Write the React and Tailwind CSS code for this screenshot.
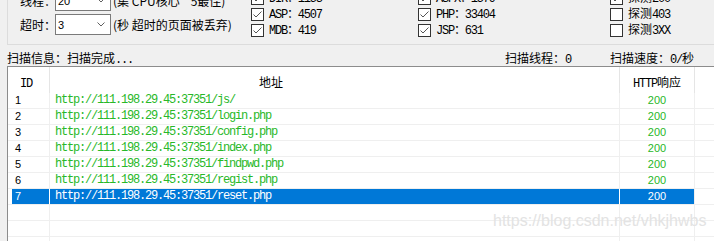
import React from "react";

const MONO = "font-['Liberation_Mono','Noto_Sans_CJK_SC',monospace] tracking-[-1.2px]";
const SANS = "font-['Liberation_Sans',sans-serif] text-[11px]";

function Chevron() {
  return (
    <svg width="8" height="5" viewBox="0 0 8 5" className="ml-auto mr-[5px]">
      <polyline points="0.5,0.5 4,4 7.5,0.5" fill="none" stroke="#606060" strokeWidth="1" />
    </svg>
  );
}

function SelRow({ label, value, note }) {
  return (
    <div className="h-[21px] flex items-center pl-[12px] leading-[16px]">
      <div className="w-[35px] shrink-0 whitespace-nowrap">{label}</div>
      <div className="w-[56px] h-[21px] shrink-0 border border-[#7a7a7a] bg-white flex items-center pl-[2px]">
        <span className={SANS}>{value}</span>
        <Chevron />
      </div>
      <div className="ml-[2px] whitespace-nowrap">{note}</div>
    </div>
  );
}

function Check({ children, checked = true }) {
  return (
    <div className="h-[16px] flex items-center whitespace-nowrap leading-[16px]">
      <div className="w-[13px] h-[13px] shrink-0 border border-[#333333] bg-white flex items-center justify-center">
        {checked && (
          <svg width="11" height="11" viewBox="0 0 11 11">
            <polyline points="1.5,5.5 4,8 9.5,2.5" fill="none" stroke="#555555" strokeWidth="1" />
          </svg>
        )}
      </div>
      <div className="ml-[5px]">{children}</div>
    </div>
  );
}

const rows = [
  { id: 1, url: "http://111.198.29.45:37351/js/" },
  { id: 2, url: "http://111.198.29.45:37351/login.php" },
  { id: 3, url: "http://111.198.29.45:37351/config.php" },
  { id: 4, url: "http://111.198.29.45:37351/index.php" },
  { id: 5, url: "http://111.198.29.45:37351/findpwd.php" },
  { id: 6, url: "http://111.198.29.45:37351/regist.php" },
  { id: 7, url: "http://111.198.29.45:37351/reset.php", sel: true },
];

function Row({ id, url, sel }) {
  return (
    <div className="flex h-[16px] border-b border-[#efefef] leading-[15px]">
      <div className={"w-[42px] shrink-0 h-full border-r pl-[4px] " + (sel ? "border-white" : "border-[#efefef]")}>
        <div className={"h-full flex items-center pl-[3px] " + SANS + (sel ? " bg-[#0078d7] text-white" : " text-black")}>
          {id}
        </div>
      </div>
      <div className={"w-[570px] shrink-0 h-full border-r flex items-center pl-[5px] " + (sel ? "border-white bg-[#0078d7] text-white" : "border-[#efefef] text-[#28b828]")}>
        <span className={MONO}>{url}</span>
      </div>
      <div className={"w-[75px] shrink-0 h-full border-r border-[#efefef] flex items-center justify-center " + SANS + (sel ? " bg-[#0078d7] text-white" : " text-[#28b828]")}>
        200
      </div>
      <div className="flex-1" />
    </div>
  );
}

function EmptyRow() {
  return (
    <div className="flex h-[16px] border-b border-[#efefef]">
      <div className="w-[42px] shrink-0 h-full border-r border-[#efefef]" />
      <div className="w-[570px] shrink-0 h-full border-r border-[#efefef]" />
      <div className="w-[75px] shrink-0 h-full border-r border-[#efefef]" />
      <div className="flex-1" />
    </div>
  );
}

export default function App() {
  return (
    <div className="w-[714px] h-[241px] overflow-hidden bg-[#f0f0f0] relative text-[12px] text-black font-['Noto_Sans_CJK_SC',sans-serif]">
      {/* group box */}
      <div className="ml-[7px] h-[45px] border-l border-b border-[#dcdcdc] overflow-hidden">
        <div className="-mt-[10px] flex items-start">
          <div className="w-[243px] shrink-0 flex flex-col gap-[3px]">
            <SelRow label="线程：" value="20" note="(集 CPU核心 * 5最佳)" />
            <SelRow label="超时：" value="3" note="(秒 超时的页面被丢弃)" />
          </div>
          <div className="w-[167px] shrink-0 flex flex-col">
            <Check><span className={MONO}>DIR：1153</span></Check>
            <Check><span className={MONO}>ASP：4507</span></Check>
            <Check><span className={MONO}>MDB：419</span></Check>
          </div>
          <div className="w-[192px] shrink-0 flex flex-col">
            <Check><span className={MONO}>ASPX：1579</span></Check>
            <Check><span className={MONO}>PHP：33404</span></Check>
            <Check><span className={MONO}>JSP：631</span></Check>
          </div>
          <div className="flex-1 flex flex-col">
            <Check>探测<span className={MONO}>200</span></Check>
            <Check checked={false}>探测<span className={MONO}>403</span></Check>
            <Check checked={false}>探测<span className={MONO}>3XX</span></Check>
          </div>
        </div>
      </div>

      {/* status line */}
      <div className="h-[21px] pl-[7px] pt-[5px] flex leading-[16px] whitespace-nowrap">
        <div className="w-[498px] shrink-0">扫描信息：扫描完成<span className={MONO}>...</span></div>
        <div className="w-[105px] shrink-0">扫描线程：<span className={MONO}>0</span></div>
        <div>扫描速度：<span className={MONO}>0/</span>秒</div>
      </div>

      {/* list */}
      <div className="ml-[7px] h-[175px] border-l border-t border-[#8c8c8c] bg-white">
        <div className="flex h-[26px] leading-[16px]">
          <div className="w-[42px] shrink-0 h-full pt-[7px] pl-[12px] border-r border-[#e5e5e5]">
            <span className={MONO}>ID</span>
          </div>
          <div className="w-[570px] shrink-0 h-full pt-[7px] pl-[209px] border-r border-[#e5e5e5]">地址</div>
          <div className="w-[75px] shrink-0 h-full pt-[7px] text-center border-r border-[#e5e5e5] whitespace-nowrap">
            <span className={MONO}>HTTP</span>响应
          </div>
          <div className="flex-1" />
        </div>
        {rows.map((r) => (
          <Row key={r.id} {...r} />
        ))}
        <EmptyRow />
        <EmptyRow />
        <EmptyRow />
      </div>

      {/* watermark */}
      <div className="absolute left-[493px] top-[212px] text-[16px] leading-[18px] text-[#e3e3e3] font-['Liberation_Sans',sans-serif] whitespace-nowrap">
        https://blog.csdn.net/vhkjhwbs
      </div>
    </div>
  );
}
